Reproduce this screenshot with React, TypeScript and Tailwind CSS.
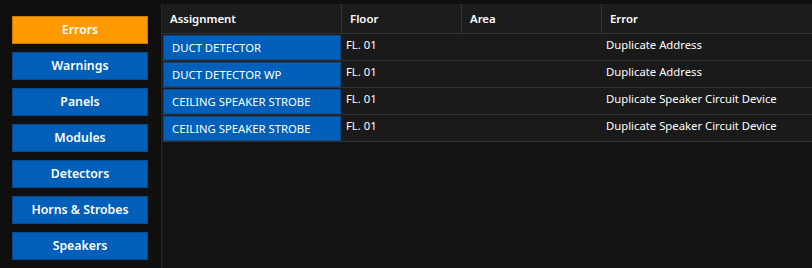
import React from 'react';

interface ErrorRow {
    assignment: string;
    floor: string;
    area: string;
    error: string;
}

const categories = ['Errors', 'Warnings', 'Panels', 'Modules', 'Detectors', 'Horns & Strobes', 'Speakers'];

const rows: ErrorRow[] = [
    { assignment: 'DUCT DETECTOR', floor: 'FL. 01', area: '', error: 'Duplicate Address' },
    { assignment: 'DUCT DETECTOR WP', floor: 'FL. 01', area: '', error: 'Duplicate Address' },
    { assignment: 'CEILING SPEAKER STROBE', floor: 'FL. 01', area: '', error: 'Duplicate Speaker Circuit Device' },
    { assignment: 'CEILING SPEAKER STROBE', floor: 'FL. 01', area: '', error: 'Duplicate Speaker Circuit Device' },
];

const cols = 'grid grid-cols-[179px_120px_140px_1fr]';

const App: React.FC = () => {
    const active = 'Errors';

    return (
        <div
            className="flex h-[268px] w-[812px] overflow-hidden bg-[#0f0f0f] text-white"
            style={{ fontFamily: '"Segoe UI", "Noto Sans", "Open Sans", sans-serif' }}
        >
            {/* Category sidebar */}
            <div className="flex w-[161px] shrink-0 flex-col gap-2 pl-3 pt-4">
                {categories.map((name) => (
                    <button
                        key={name}
                        className={`h-7 w-[136px] border text-[12.3px] font-semibold leading-none ${name === active
                            ? 'border-[#c97800] bg-[#ff9900]'
                            : 'border-[#0a4a8c] bg-[#005fb8]'
                            }`}
                    >
                        {name}
                    </button>
                ))}
            </div>

            {/* Results table */}
            <div className="flex flex-1 flex-col pt-1">
                <div className="flex flex-1 flex-col border-l border-[#262626] bg-[#141414]">
                    <div className={`${cols} h-[30px] border-b border-[#333333] bg-[#1c1c1c] text-[11.4px] font-semibold`}>
                        <div className="flex items-center pl-2">Assignment</div>
                        <div className="flex items-center border-l border-[#333333] pl-2">Floor</div>
                        <div className="flex items-center border-l border-[#333333] pl-2">Area</div>
                        <div className="flex items-center border-l border-[#333333] pl-2">Error</div>
                    </div>

                    {rows.map((row, i) => (
                        <div key={i} className={`${cols} h-[27px] border-b border-[#333333] bg-[#1a1a1a] text-[11.3px]`}>
                            <div className="pl-px pt-px">
                                <div className="flex h-[25px] items-center border border-[#0a4a8c] bg-[#005fb8] pl-2 pt-px">
                                    {row.assignment}
                                </div>
                            </div>
                            <div className="pl-[5px] pt-[3px]">{row.floor}</div>
                            <div className="pl-[5px] pt-[3px]">{row.area}</div>
                            <div className="pl-[5px] pt-[3px]">{row.error}</div>
                        </div>
                    ))}
                </div>
            </div>
        </div>
    );
};

export default App;
